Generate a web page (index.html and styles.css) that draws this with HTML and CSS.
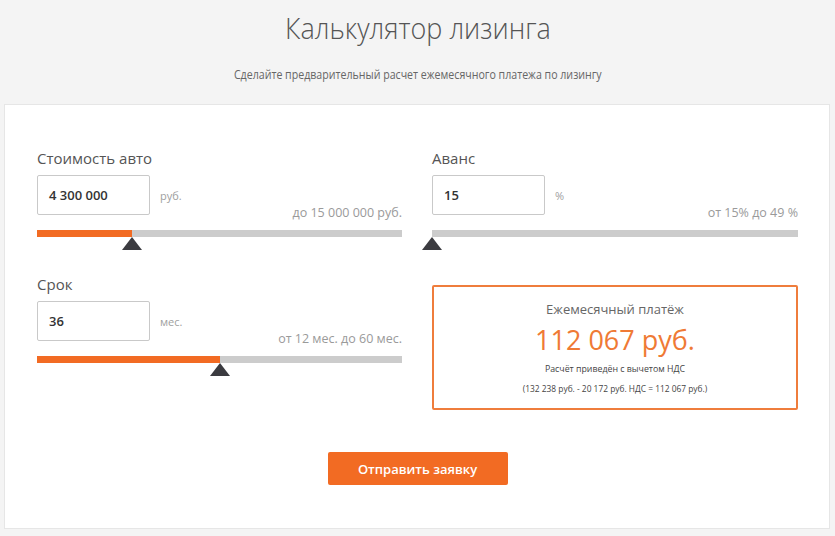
FILE: index.html
```html
<!DOCTYPE html>
<html lang="ru">
<head>
<meta charset="utf-8">
<title>Калькулятор лизинга</title>
<link rel="stylesheet" href="styles.css">
</head>
<body>
<header class="head">
  <h1 class="title"><span class="cond">Калькулятор лизинга</span></h1>
  <p class="subtitle"><span class="cond">Сделайте предварительный расчет ежемесячного платежа по лизингу</span></p>
</header>
<main class="card">
  <div class="grid">
    <div class="field">
      <div class="label">Стоимость авто</div>
      <div class="row">
        <div class="input">4 300 000</div>
        <span class="unit">руб.</span>
        <span class="hint">до 15 000 000 руб.</span>
      </div>
      <div class="track"><div class="fill" style="width:26%"></div><div class="thumb" style="left:26%"></div></div>
    </div>
    <div class="field">
      <div class="label">Аванс</div>
      <div class="row">
        <div class="input">15</div>
        <span class="unit">%</span>
        <span class="hint">от 15% до 49 %</span>
      </div>
      <div class="track"><div class="fill" style="width:0%"></div><div class="thumb" style="left:0%"></div></div>
    </div>
    <div class="field">
      <div class="label">Срок</div>
      <div class="row">
        <div class="input">36</div>
        <span class="unit">мес.</span>
        <span class="hint">от 12 мес. до 60 мес.</span>
      </div>
      <div class="track"><div class="fill" style="width:50%"></div><div class="thumb" style="left:50%"></div></div>
    </div>
    <div class="result">
      <div class="res-title">Ежемесячный платёж</div>
      <div class="res-sum">112 067 руб.</div>
      <div class="res-note">Расчёт приведён с вычетом НДС</div>
      <div class="res-calc">(132 238 руб. - 20 172 руб. НДС = 112 067 руб.)</div>
    </div>
  </div>
  <div class="actions"><button class="btn">Отправить заявку</button></div>
</main>
</body>
</html>
```
FILE: styles.css
```css
html, body { margin: 0; padding: 0; }
body {
  background: #f4f4f4;
  font-family: "Open Sans", "Liberation Sans", sans-serif;
  color: #555;
  width: 835px;
  height: 536px;
  overflow: hidden;
}
.head { text-align: center; }
.cond { display: inline-block; transform-origin: center; white-space: nowrap; }
.title {
  margin: 0;
  padding-top: 8px;
  font-size: 29px;
  font-weight: 300;
  line-height: 40px;
  color: #555;
}
.title .cond { transform: scaleX(0.93); }
.subtitle {
  margin: 0;
  padding-top: 19px;
  font-size: 12px;
  line-height: 16px;
  color: #666;
  height: 37px;
}
.subtitle .cond { transform: scaleX(0.885); }
.card {
  margin: 0 5px 0 4px;
  background: #fff;
  border: 1px solid #e6e6e6;
  padding: 43px 31px 43px 32px;
}
.grid {
  display: grid;
  grid-template-columns: 365px 366px;
  column-gap: 30px;
  row-gap: 24px;
}
.label {
  font-size: 15px;
  line-height: 20px;
  color: #555;
  margin-bottom: 7px;
}
.row {
  display: flex;
  align-items: center;
  height: 40px;
}
.input {
  box-sizing: border-box;
  width: 113px;
  height: 40px;
  border: 1px solid #c9c9c9;
  border-radius: 2px;
  padding-left: 11px;
  font-size: 13px;
  font-weight: 600;
  color: #333;
  line-height: 38px;
}
.unit {
  margin-left: 10px;
  font-size: 11px;
  color: #a0a0a0;
}
.hint {
  margin-left: auto;
  align-self: flex-end;
  margin-bottom: -7px;
  font-size: 12.5px;
  line-height: 18px;
  color: #9a9a9a;
}
.track {
  position: relative;
  margin-top: 15px;
  height: 7px;
  background: #cccccc;
  margin-bottom: 13px;
}
.fill {
  height: 100%;
  background: #f26b23;
}
.thumb {
  position: absolute;
  top: 7px;
  width: 0;
  height: 0;
  margin-left: -10px;
  border-left: 10px solid transparent;
  border-right: 10px solid transparent;
  border-bottom: 13px solid #3b3b40;
}
.result {
  box-sizing: border-box;
  margin-top: 11px;
  height: 125px;
  border: 2px solid #ef7d3c;
  border-radius: 2px;
  text-align: center;
  padding-top: 13px;
}
.res-title {
  font-size: 13px;
  line-height: 18px;
  color: #666;
}
.res-sum {
  font-size: 27px;
  line-height: 34px;
  color: #ef7a35;
  margin-top: 5px;
}
.res-note {
  font-size: 8.8px;
  line-height: 12px;
  color: #444;
  margin-top: 6px;
}
.res-calc {
  font-size: 8.4px;
  line-height: 12px;
  color: #444;
  margin-top: 8px;
}
.actions {
  display: flex;
  justify-content: center;
  margin-top: 42px;
}
.btn {
  width: 180px;
  height: 33px;
  border: 0;
  border-radius: 2px;
  background: #f26b23;
  color: #fff;
  font-family: "Open Sans", "Liberation Sans", sans-serif;
  font-size: 13px;
  font-weight: 600;
  cursor: pointer;
}
```
